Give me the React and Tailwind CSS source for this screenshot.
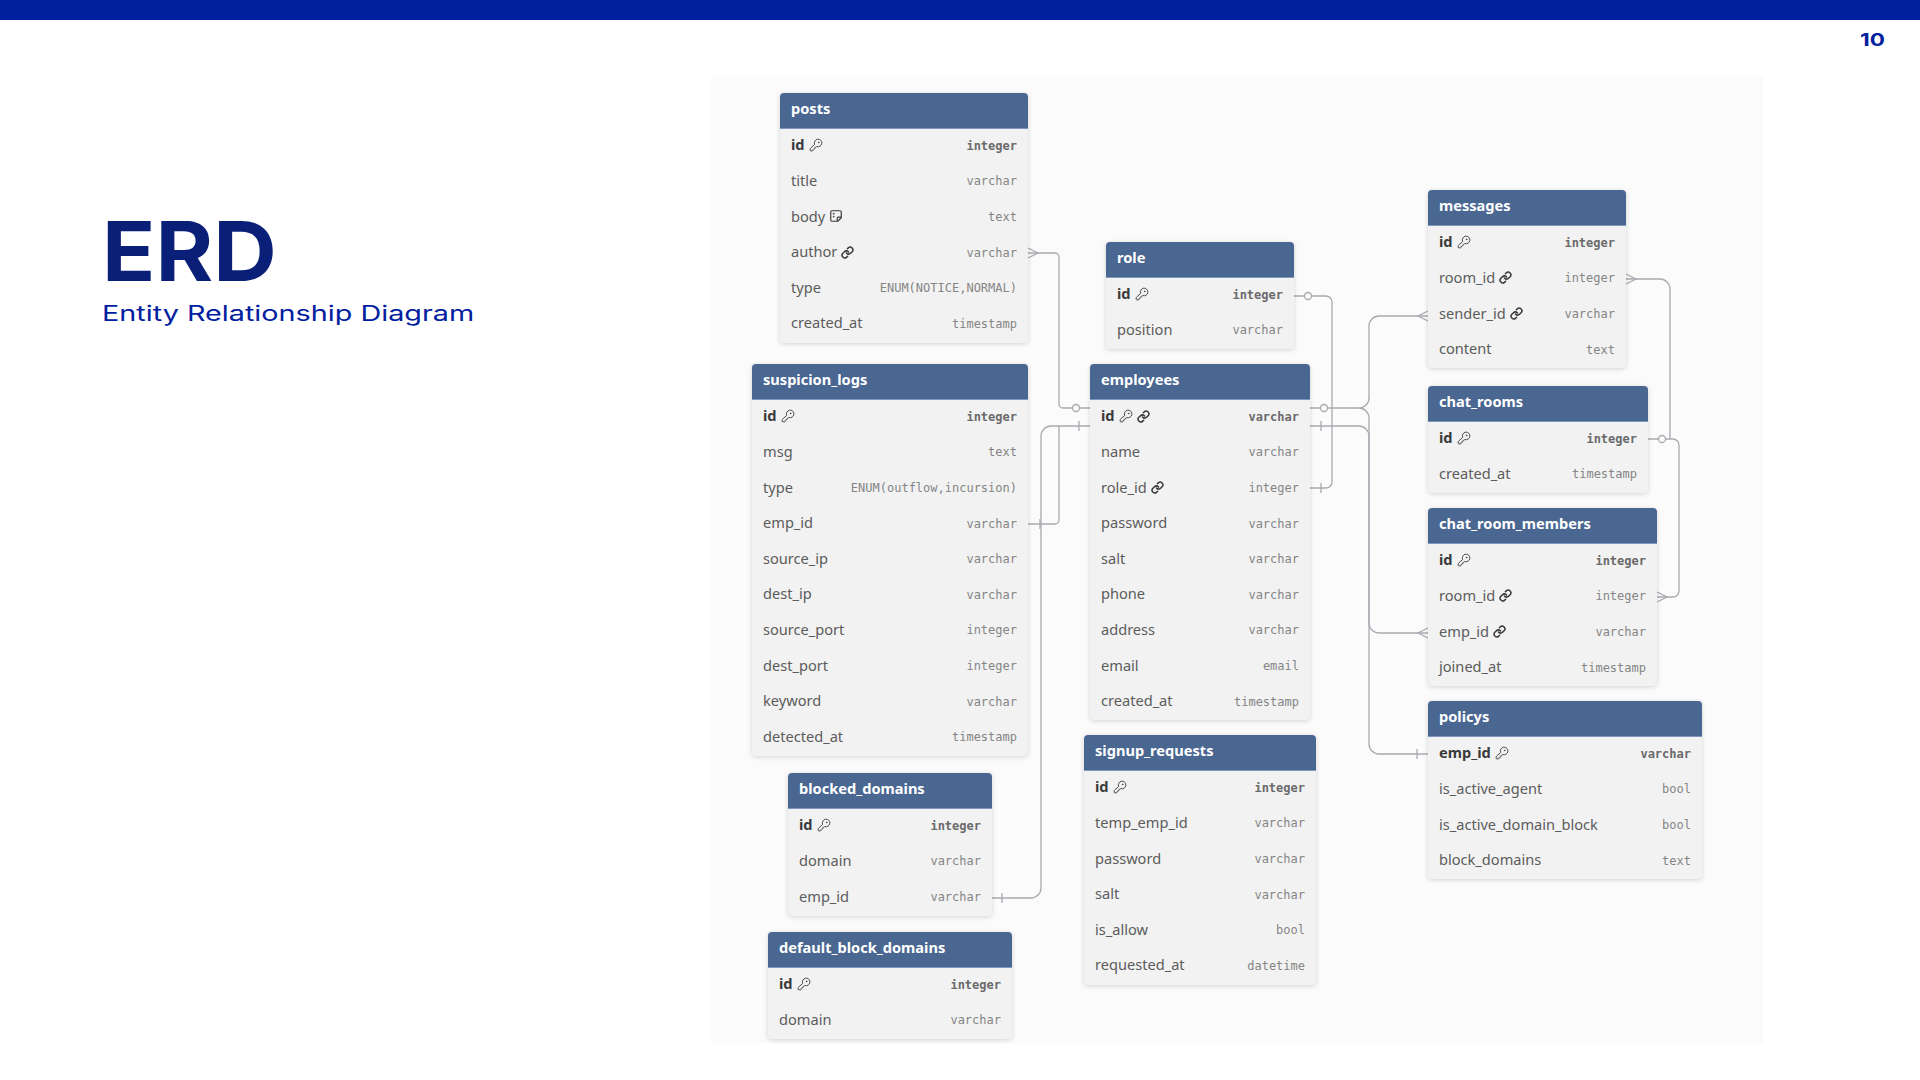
import { KeyRound, Link } from "lucide-react";

const tables = [
  {
    name: "posts",
    pos: "left-[69px] top-[18px] w-[248px]",
    rows: [
      ["id", "integer", "pk"],
      ["title", "varchar"],
      ["body", "text", "note"],
      ["author", "varchar", "fk"],
      ["type", "ENUM(NOTICE,NORMAL)"],
      ["created_at", "timestamp"],
    ],
  },
  {
    name: "suspicion_logs",
    pos: "left-[41px] top-[289px] w-[276px]",
    rows: [
      ["id", "integer", "pk"],
      ["msg", "text"],
      ["type", "ENUM(outflow,incursion)"],
      ["emp_id", "varchar"],
      ["source_ip", "varchar"],
      ["dest_ip", "varchar"],
      ["source_port", "integer"],
      ["dest_port", "integer"],
      ["keyword", "varchar"],
      ["detected_at", "timestamp"],
    ],
  },
  {
    name: "role",
    pos: "left-[395px] top-[167px] w-[188px]",
    rows: [
      ["id", "integer", "pk"],
      ["position", "varchar"],
    ],
  },
  {
    name: "employees",
    pos: "left-[379px] top-[289px] w-[220px]",
    rows: [
      ["id", "varchar", "pkfk"],
      ["name", "varchar"],
      ["role_id", "integer", "fk"],
      ["password", "varchar"],
      ["salt", "varchar"],
      ["phone", "varchar"],
      ["address", "varchar"],
      ["email", "email"],
      ["created_at", "timestamp"],
    ],
  },
  {
    name: "messages",
    pos: "left-[717px] top-[115px] w-[198px]",
    rows: [
      ["id", "integer", "pk"],
      ["room_id", "integer", "fk"],
      ["sender_id", "varchar", "fk"],
      ["content", "text"],
    ],
  },
  {
    name: "chat_rooms",
    pos: "left-[717px] top-[311px] w-[220px]",
    rows: [
      ["id", "integer", "pk"],
      ["created_at", "timestamp"],
    ],
  },
  {
    name: "chat_room_members",
    pos: "left-[717px] top-[433px] w-[229px]",
    rows: [
      ["id", "integer", "pk"],
      ["room_id", "integer", "fk"],
      ["emp_id", "varchar", "fk"],
      ["joined_at", "timestamp"],
    ],
  },
  {
    name: "policys",
    pos: "left-[717px] top-[626px] w-[274px]",
    rows: [
      ["emp_id", "varchar", "pk"],
      ["is_active_agent", "bool"],
      ["is_active_domain_block", "bool"],
      ["block_domains", "text"],
    ],
  },
  {
    name: "signup_requests",
    pos: "left-[373px] top-[660px] w-[232px]",
    rows: [
      ["id", "integer", "pk"],
      ["temp_emp_id", "varchar"],
      ["password", "varchar"],
      ["salt", "varchar"],
      ["is_allow", "bool"],
      ["requested_at", "datetime"],
    ],
  },
  {
    name: "blocked_domains",
    pos: "left-[77px] top-[698px] w-[204px]",
    rows: [
      ["id", "integer", "pk"],
      ["domain", "varchar"],
      ["emp_id", "varchar"],
    ],
  },
  {
    name: "default_block_domains",
    pos: "left-[57px] top-[857px] w-[244px]",
    rows: [
      ["id", "integer", "pk"],
      ["domain", "varchar"],
    ],
  },
];

function NoteIcon() {
  return (
    <svg width="14" height="14" viewBox="0 0 24 24" fill="none" stroke="currentColor" strokeWidth="2" strokeLinejoin="round" className="text-[#3a3a3a]">
      <path d="M5 3h14a2 2 0 0 1 2 2v10l-6 6H5a2 2 0 0 1-2-2V5a2 2 0 0 1 2-2z" />
      <path d="M21 14h-5a2 2 0 0 0-2 2v5" />
      <circle cx="8" cy="8" r="0.6" />
      <circle cx="8" cy="13" r="0.6" />
    </svg>
  );
}

function Row({ name, type, kind }) {
  const isPk = kind === "pk" || kind === "pkfk";
  return (
    <div className="flex h-[35.6px] items-center justify-between px-[11px]">
      <span className={`flex items-center gap-[4px] pb-[3px] text-[14.6px] ${isPk ? "font-bold text-[#3a3a3a]" : "text-[#5c5c5c]"}`}>
        {name}
        {isPk && <KeyRound size={14} strokeWidth={1.6} className="text-[#3f3f3f]" />}
        {(kind === "fk" || kind === "pkfk") && <Link size={13} strokeWidth={2.8} className="text-[#3a3a3a]" />}
        {kind === "note" && <NoteIcon />}
      </span>
      <span className={`pb-[2px] font-['DejaVu_Sans_Mono',monospace] text-[12px] ${isPk ? "font-bold text-[#6a6a6a]" : "text-[#858585]"}`}>
        {type}
      </span>
    </div>
  );
}

function Table({ name, pos, rows }) {
  return (
    <div className={`absolute overflow-hidden rounded-[4px] bg-[#f2f2f2] shadow-[0_1px_5px_rgba(0,0,0,0.16)] ${pos}`}>
      <div className="flex h-[36px] items-center border-b border-[#7f97bb] bg-[#4a6792] px-[11px] pb-[3px] text-[14.6px] font-bold text-white">
        {name}
      </div>
      {rows.map(([n, t, k]) => (
        <Row key={n} name={n} type={t} kind={k} />
      ))}
    </div>
  );
}

function Ring({ x, y }) {
  return <circle cx={x} cy={y} r="3.5" fill="#fbfbfb" />;
}

function Tick({ x, y }) {
  return <path d={`M${x} ${y - 5}v10`} />;
}

// crow foot, tips on the table edge at x, dir points away from the table
function Crow({ x, y, dir }) {
  const l = x + dir * 10;
  return <path d={`M${x} ${y - 5}L${l} ${y}L${x} ${y + 5}`} />;
}

function Edges() {
  return (
    <svg
      className="absolute inset-0"
      width="1052"
      height="968"
      viewBox="711 75 1052 968"
      fill="none"
      stroke="#a9a9b0"
      strokeWidth="1.3"
    >
      {/* posts.author - employees.id */}
      <path d="M1028 253H1055a4 4 0 0 1 4 4V404a4 4 0 0 0 4 4H1090" />
      <Crow x={1028} y={253} dir={1} />
      <Ring x={1076} y={408} />

      {/* blocked_domains.emp_id - employees.id */}
      <path d="M992 898H1031a10 10 0 0 0 10-10V436a10 10 0 0 1 10-10H1090" />
      <Tick x={1002} y={898} />
      <Tick x={1079} y={426} />

      {/* suspicion_logs.emp_id - employees.id */}
      <path d="M1028 524H1055a4 4 0 0 0 4-4V426" />
      <Tick x={1040} y={524} />

      {/* role.id - employees.role_id */}
      <path d="M1294 296H1326a6 6 0 0 1 6 6V482a6 6 0 0 1-6 6H1310" />
      <Ring x={1308} y={296} />
      <Tick x={1321} y={488} />

      {/* employees.id - messages.sender_id */}
      <path d="M1310 408H1359a10 10 0 0 0 10-10V326a10 10 0 0 1 10-10H1428" />
      <Crow x={1428} y={316} dir={-1} />
      <Ring x={1324} y={408} />

      {/* employees.id - chat_room_members.emp_id */}
      <path d="M1359 408a10 10 0 0 1 10 10V623a10 10 0 0 0 10 10H1428" />
      <Crow x={1428} y={633} dir={-1} />

      {/* employees.id - policys.emp_id */}
      <path d="M1310 426H1359a10 10 0 0 1 10 10V744a10 10 0 0 0 10 10H1428" />
      <Tick x={1321} y={426} />
      <Tick x={1417} y={754} />

      {/* messages.room_id - chat_rooms.id */}
      <path d="M1626 279H1660a10 10 0 0 1 10 10V439" />
      <Crow x={1626} y={279} dir={1} />

      {/* chat_room_members.room_id - chat_rooms.id */}
      <path d="M1648 439H1673a6 6 0 0 1 6 6V591a6 6 0 0 1-6 6H1657" />
      <Crow x={1657} y={597} dir={1} />
      <Ring x={1662} y={439} />
    </svg>
  );
}

export default function App() {
  return (
    <div className="h-[1080px] w-[1920px] overflow-hidden bg-white font-['Noto_Sans',sans-serif]">
      <div className="h-5 bg-[#00209f]" />
      <div className="flex h-[55px] justify-end pr-[35px] pt-[7px]">
        <span className="origin-right scale-x-[1.25] font-['Inter',sans-serif] text-[18px] font-bold leading-[26px] text-[#00209f]">10</span>
      </div>
      <div className="flex">
        <div className="w-[711px] pl-[102px] pt-[126px]">
          <h1 className="origin-left scale-x-[1.06] font-['Inter',sans-serif] text-[83px] font-bold leading-[100px] text-[#0a1f78]">ERD</h1>
          <p className="mt-[-2px] origin-left scale-x-[1.37] font-['Inter',sans-serif] text-[21px] font-normal leading-[30px] text-[#00209f]">
            Entity Relationship Diagram
          </p>
        </div>
        <div className="relative h-[968px] w-[1052px] bg-[#fbfbfb]">
          <Edges />
          {tables.map((t) => (
            <Table key={t.name} {...t} />
          ))}
        </div>
      </div>
    </div>
  );
}
